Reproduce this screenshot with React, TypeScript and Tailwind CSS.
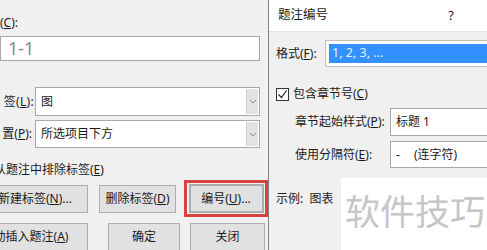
import React from "react";

const font = { fontFamily: '"Noto Sans", "Noto Sans CJK SC", sans-serif' };

function Key({ k }: { k: string }) {
  return (
    <>
      (<u>{k}</u>)
    </>
  );
}

function Btn({ children, className }: { children: React.ReactNode; className?: string }) {
  return (
    <div
      className={
        "h-[28px] flex items-center justify-center whitespace-nowrap bg-[#e1e1e1] border border-[#adadad] text-[12px] text-[#1a1a1a] shrink-0 " +
        (className ?? "")
      }
    >
      {children}
    </div>
  );
}

function Combo({ text, className }: { text: string; className?: string }) {
  return (
    <div
      className={
        "w-[225px] flex items-center bg-white border border-[#a8a8a8] pl-[5px] pr-[1px] " +
        (className ?? "")
      }
    >
      <span className="flex-1 text-[12px] text-[#1a1a1a]">{text}</span>
      <div className="w-[12px] h-[calc(100%-2px)] bg-[#e3e3e3] border-l border-[#cfcfcf] flex items-center justify-center">
        <svg width="8" height="5" viewBox="0 0 8 5">
          <path d="M1 1l3 3 3-3" fill="none" stroke="#8a8a8a" strokeWidth="1" />
        </svg>
      </div>
    </div>
  );
}

function LeftDialog() {
  return (
    <div className="w-[268px] h-[250px] shrink-0 bg-[#f0f0f0] overflow-hidden flex flex-col pt-[15px] text-[12px] text-[#1a1a1a]">
      <div className="h-[16px] leading-[16px]">
        <Key k="C" />:
      </div>
      <div className="mt-[5px] h-[25px] w-[260px] bg-white border border-[#a8a8a8] flex items-center pl-[7px] text-[18px] text-[#8a8a8a]">
        1-1
      </div>
      <div className="mt-[3px] h-px w-[262px] bg-[#dadada]" />
      <div className="mt-[7px] h-px w-[262px] bg-[#dadada]" />

      <div className="mt-[16px] h-[29px] flex items-center">
        <div className="w-[35px] overflow-hidden flex justify-end whitespace-nowrap pr-[1px]">
          <span className="tracking-[0.3px]">
            签(<u>L</u>):
          </span>
        </div>
        <Combo text="图" className="h-[29px]" />
      </div>
      <div className="mt-[4px] h-[28px] flex items-center">
        <div className="w-[35px] overflow-hidden flex justify-end whitespace-nowrap pr-[3px]">
          置(<u>P</u>):
        </div>
        <Combo text="所选项目下方" className="h-[28px]" />
      </div>

      <div className="mt-[14px] h-[16px] leading-[16px] whitespace-nowrap -ml-[6px]">
        从题注中排除标签(<u>E</u>)
      </div>

      <div className="mt-[2px] h-[37px] flex items-center">
        <Btn className="-ml-[18px] w-[106px]">
          新建标签(<u>N</u>)...
        </Btn>
        <Btn className="ml-[11px] w-[77px]">
          删除标签(<u>D</u>)
        </Btn>
        <div className="ml-[8px] w-[84px] h-[37px] border-[3px] border-[#d9433f] flex items-center justify-center">
          <Btn className="w-[75px] h-[29px] border-2 border-[#0078d7]">
            编号(<u>U</u>)...
          </Btn>
        </div>
      </div>

      <div className="mt-[6px] flex items-start">
        <Btn className="-ml-[38px] w-[126px]">
          自动插入题注(<u>A</u>)
        </Btn>
        <Btn className="ml-[20px] w-[72px]">确定</Btn>
        <Btn className="ml-[10px] w-[75px]">关闭</Btn>
      </div>
    </div>
  );
}

function RightDialog() {
  return (
    <div className="flex-1 h-[250px] flex flex-col border-l border-[#808080] text-[12px] text-[#1a1a1a] overflow-hidden">
      <div className="h-[31px] shrink-0 bg-white flex items-center justify-between pl-[9px] pr-[33px]">
        <span className="text-[12.5px]">题注编号</span>
        <span className="text-[13px]">?</span>
      </div>
      <div className="flex-1 bg-[#f0f0f0] border-t border-[#e2e2e2] flex flex-col">
        <div className="mt-[8px] h-[27px] flex items-center pl-[7px]">
          <div className="w-[49px] whitespace-nowrap">
            格式(<u>F</u>):
          </div>
          <div className="flex-1 h-[27px] bg-white border border-[#c9bfb5] border-r-0 p-[3px] pr-0">
            <div className="h-full bg-[#3391ff] flex items-center pl-[3px] text-[#e4f1ff] text-[12.5px]">
              1, 2, 3, ...
            </div>
          </div>
        </div>

        <div className="mt-[20px] h-[14px] flex items-center pl-[7px]">
          <div className="w-[13px] h-[13px] bg-white border border-[#333] flex items-center justify-center">
            <svg width="11" height="11" viewBox="0 0 11 11">
              <path d="M1.5 5.5l3 3 5-7" fill="none" stroke="#222" strokeWidth="1.2" />
            </svg>
          </div>
          <span className="ml-[4px] whitespace-nowrap">
            包含章节号(<u>C</u>)
          </span>
        </div>

        <div className="mt-[7px] h-[28px] flex items-center pl-[26px]">
          <div className="w-[95px] overflow-hidden whitespace-nowrap">
            章节起始样式(<u>P</u>):
          </div>
          <div className="flex-1 h-[28px] bg-white border border-[#a8a8a8] border-r-0 flex items-center pl-[5px]">
            标题 1
          </div>
        </div>

        <div className="mt-[5px] h-[27px] flex items-center pl-[26px]">
          <div className="w-[95px] overflow-hidden whitespace-nowrap">
            使用分隔符(<u>E</u>):
          </div>
          <div className="flex-1 h-[27px] bg-white border border-[#a8a8a8] border-r-0 flex items-center pl-[5px]">
            <span className="w-[18px]">-</span>
            <span>(连字符)</span>
          </div>
        </div>

        <div className="mt-[10px] flex-1 flex">
          <div className="w-[72px] pl-[7px] pt-[12px] whitespace-nowrap">示例:&nbsp; 图表</div>
          <div className="flex-1 bg-white pt-[16px] pl-[4px] overflow-hidden">
            <div className="text-[35px] leading-[36px] text-[#c6c6c6] whitespace-nowrap">
              软件技巧
            </div>
          </div>
        </div>
      </div>
    </div>
  );
}

export default function App() {
  return (
    <div className="w-[487px] h-[250px] flex overflow-hidden bg-[#f0f0f0]" style={font}>
      <LeftDialog />
      <RightDialog />
    </div>
  );
}
